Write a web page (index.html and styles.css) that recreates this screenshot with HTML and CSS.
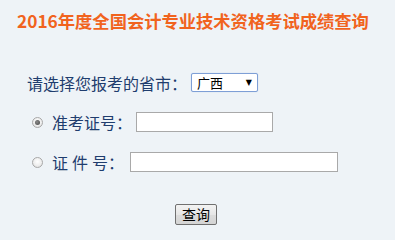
FILE: index.html
```
<!DOCTYPE html>
<html lang="zh-CN">
<head>
<meta charset="utf-8">
<title>2016年度全国会计专业技术资格考试成绩查询</title>
<link rel="stylesheet" href="styles.css">
</head>
<body>
<div class="page">
  <h1 class="title">2016年度全国会计专业技术资格考试成绩查询</h1>
  <form class="form">
    <div class="row row-province">
      <span class="label">请选择您报考的省市：</span>
      <div class="select"><span class="select-text">广西</span><span class="select-arrow">▼</span></div>
    </div>
    <div class="row row-radio">
      <span class="radio checked"></span>
      <span class="label">准考证号：</span>
      <input class="text-input input-short" type="text">
    </div>
    <div class="row row-radio">
      <span class="radio"></span>
      <span class="label label-id"><span class="sp">证</span><span class="sp">件</span>号：</span>
      <input class="text-input input-long" type="text">
    </div>
    <div class="row-button">
      <button class="btn" type="button">查询</button>
    </div>
  </form>
</div>
</body>
</html>
```
FILE: styles.css
```
html, body {
  margin: 0;
  padding: 0;
  background: #eef3f7;
}
body {
  font-family: "Noto Sans CJK SC", "Noto Sans", sans-serif;
  width: 395px;
  height: 240px;
  overflow: hidden;
}
.page {
  padding-top: 9px;
}
.title {
  margin: 0 0 0 17px;
  font-size: 17.3px;
  line-height: 24px;
  font-weight: bold;
  color: #f1631e;
  white-space: nowrap;
}
.form {
  margin: 40px 0 0 0;
}
.row {
  display: flex;
  align-items: center;
}
.row-province {
  height: 19px;
  padding-left: 27px;
}
.row-radio {
  height: 20px;
  margin-top: 20px;
  padding-left: 32px;
}
.label {
  font-size: 16px;
  line-height: 20px;
  color: #1f3d6e;
  white-space: nowrap;
  margin-right: 4px;
}
.row-radio .label {
  margin-left: 9px;
}
.sp {
  margin-right: 4px;
}
.row-radio .label-id {
  margin-right: 6px;
}
.select {
  box-sizing: border-box;
  width: 67px;
  height: 19px;
  border: 1px solid #7e9fd6;
  border-radius: 2px;
  background: #fff;
  display: flex;
  align-items: center;
  padding-left: 5px;
  padding-right: 5px;
  box-shadow: 0 0 1px #a9c2e8;
}
.select-text {
  font-size: 13px;
  line-height: 15px;
  color: #000;
  flex: 1;
}
.select-arrow {
  font-size: 8px;
  line-height: 8px;
  color: #000;
  font-family: "DejaVu Sans", sans-serif;
}
.radio {
  box-sizing: border-box;
  width: 11px;
  height: 11px;
  border-radius: 50%;
  border: 1px solid #a8a8a8;
  background: radial-gradient(circle at 50% 40%, #ffffff 0%, #ececec 60%, #d6d6d6 100%);
  position: relative;
  flex: none;
}
.radio.checked::after {
  content: "";
  position: absolute;
  left: 2px;
  top: 2px;
  width: 5px;
  height: 5px;
  border-radius: 50%;
  background: radial-gradient(circle at 40% 40%, #8a8a8a 0%, #444 100%);
}
.text-input {
  box-sizing: border-box;
  height: 20px;
  border: 1px solid #a9a9a9;
  background: #fff;
  margin: 0;
  padding: 0 2px;
  outline: none;
}
.input-short {
  width: 137px;
}
.input-long {
  width: 208px;
}
.row-button {
  margin-top: 29px;
  padding-left: 175px;
}
.btn {
  box-sizing: border-box;
  width: 42px;
  height: 21px;
  margin: 0;
  padding: 0;
  border: 1px solid #707070;
  border-radius: 2px;
  background: linear-gradient(#f3f3f3, #e6e6e6 50%, #dcdcdc 51%, #d4d4d4);
  font-family: "Noto Sans CJK SC", sans-serif;
  font-size: 14px;
  line-height: 19px;
  color: #000;
}
```
